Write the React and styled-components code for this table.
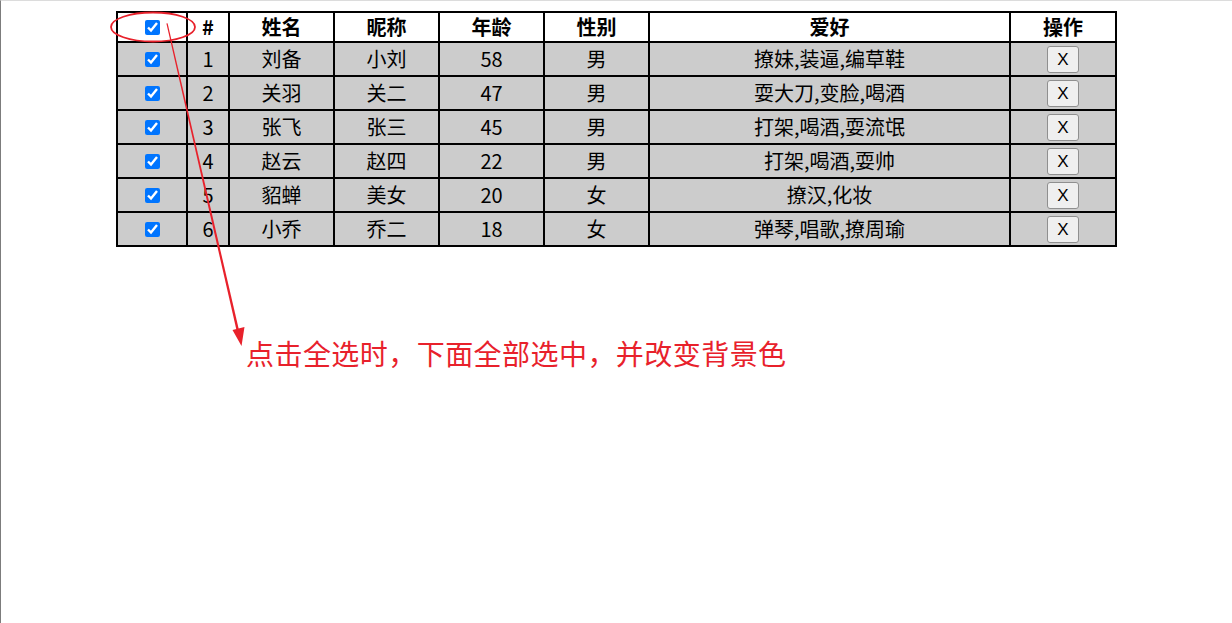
import React from "react";
import styled, { createGlobalStyle } from "styled-components";

const Global = createGlobalStyle`
  html, body { margin: 0; padding: 0; background: #fff; }
  body { font-family: "Noto Sans CJK SC", "Noto Sans", sans-serif; }
`;

const Page = styled.div`
  position: relative;
  box-sizing: border-box;
  min-height: 623px;
  border-top: 1px solid #dcdcdc;
  border-left: 1px solid #7c7c7c;
  padding-top: 10px;
`;

const Table = styled.table`
  width: 999px;
  margin: 0 auto;
  border-collapse: collapse;
  table-layout: fixed;
  font-size: 20px;
  color: #000;
`;

const HeadCell = styled.th`
  border: 2px solid #000;
  padding: 0;
  height: 28px;
  line-height: 28px;
  font-weight: 700;
  text-align: center;
  background: #fff;
`;

const Row = styled.tr`
  background: ${(p) => (p.$checked ? "#cccccc" : "#fff")};
`;

const Cell = styled.td`
  border: 2px solid #000;
  padding: 0;
  height: 32px;
  line-height: 32px;
  text-align: center;
  vertical-align: middle;
  white-space: nowrap;
`;

const Check = styled.input.attrs({ type: "checkbox" })`
  width: 15px;
  height: 15px;
  margin: 0;
  vertical-align: middle;
  accent-color: #0075ff;
  position: relative;
  top: -2px;
`;

const DelButton = styled.button`
  box-sizing: border-box;
  width: 32px;
  height: 27px;
  padding: 0;
  border: 1px solid #8f8f8f;
  border-radius: 3px;
  background: #efefef;
  font-family: "Liberation Sans", Arial, sans-serif;
  font-size: 17px;
  line-height: 25px;
  color: #000;
  vertical-align: middle;
  cursor: pointer;
  position: relative;
  top: -2px;
`;

const Note = styled.p`
  margin: 90px 0 0 245px;
  font-size: 28px;
  letter-spacing: 0.45px;
  line-height: 32px;
  color: #e8212b;
`;

const Overlay = styled.svg`
  position: absolute;
  left: 0;
  top: 0;
  pointer-events: none;
`;

const widths = [70, 42, 105, 105, 105, 105, 361, 106];
const heads = ["#", "姓名", "昵称", "年龄", "性别", "爱好", "操作"];

const data = [
  [1, "刘备", "小刘", 58, "男", "撩妹,装逼,编草鞋"],
  [2, "关羽", "关二", 47, "男", "耍大刀,变脸,喝酒"],
  [3, "张飞", "张三", 45, "男", "打架,喝酒,耍流氓"],
  [4, "赵云", "赵四", 22, "男", "打架,喝酒,耍帅"],
  [5, "貂蝉", "美女", 20, "女", "撩汉,化妆"],
  [6, "小乔", "乔二", 18, "女", "弹琴,唱歌,撩周瑜"],
];

export default function App() {
  return (
    <>
      <Global />
      <Page>
        <Table>
          <colgroup>
            {widths.map((w, i) => (
              <col key={i} style={{ width: w }} />
            ))}
          </colgroup>
          <thead>
            <tr>
              <HeadCell>
                <Check defaultChecked />
              </HeadCell>
              {heads.map((h) => (
                <HeadCell key={h}>{h}</HeadCell>
              ))}
            </tr>
          </thead>
          <tbody>
            {data.map((r) => (
              <Row key={r[0]} $checked>
                <Cell>
                  <Check defaultChecked />
                </Cell>
                {r.map((v, i) => (
                  <Cell key={i}>{v}</Cell>
                ))}
                <Cell>
                  <DelButton>X</DelButton>
                </Cell>
              </Row>
            ))}
          </tbody>
        </Table>
        <Note>点击全选时，下面全部选中，并改变背景色</Note>
        <Overlay width="1232" height="623" viewBox="0 0 1232 623">
          <ellipse cx="152" cy="26" rx="42" ry="14.5" fill="none" stroke="#e8212b" strokeWidth="1.8" />
          <polygon points="165.4,22.5 166.6,22.2 238.2,330 235.8,330.6" fill="#e8212b" />
          <polygon points="231.5,329 243.5,326 240.5,345" fill="#e8212b" />
        </Overlay>
      </Page>
    </>
  );
}
